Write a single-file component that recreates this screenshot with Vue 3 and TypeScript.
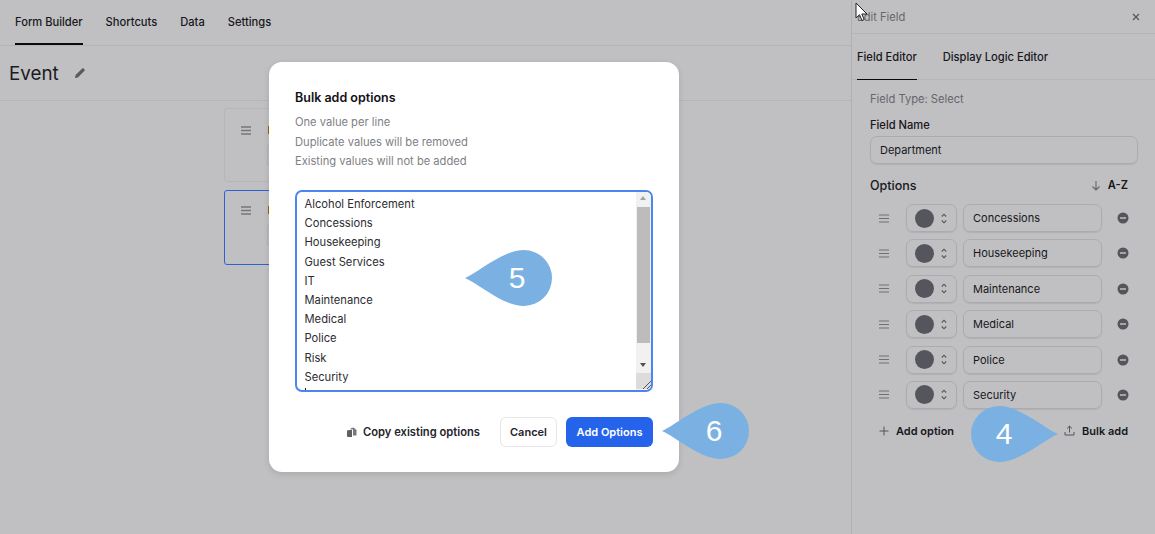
<script setup lang="ts">
const tabs: string[] = ['Form Builder', 'Shortcuts', 'Data', 'Settings']
const instructions: string[] = ['One value per line', 'Duplicate values will be removed', 'Existing values will not be added']
const lines: string[] = ['Alcohol Enforcement', 'Concessions', 'Housekeeping', 'Guest Services', 'IT', 'Maintenance', 'Medical', 'Police', 'Risk', 'Security']
const options: string[] = ['Concessions', 'Housekeeping', 'Maintenance', 'Medical', 'Police', 'Security']
const bubbles = [
  { n: '5', cls: 'b5' },
  { n: '6', cls: 'b6' },
  { n: '4', cls: 'b4' },
]
</script>

<template>
  <div class="page">
    <main class="main">
      <nav class="tabs">
        <span v-for="(t, i) in tabs" :key="t" class="tab" :class="{ active: i === 0 }">{{ t }}</span>
      </nav>
      <header class="title-row">
        <h1>Event</h1>
        <svg class="pencil" width="12" height="12" viewBox="0 0 12 12"><path d="M1 11l.6-2.900L8.200 1.500a1 1 0 0 1 1.400 0l.9.900a1 1 0 0 1 0 1.400L3.900 10.400z" fill="#59595e"/></svg>
      </header>
      <section class="cards">
        <div class="card">
          <svg class="grip" width="10" height="9" viewBox="0 0 10 9"><path d="M0 1h10M0 4.500h10M0 8h10" stroke="#77777b" stroke-width="1.300"/></svg>
          <div class="card-body">
            <span class="card-label"></span>
            <span class="card-input"></span>
          </div>
        </div>
        <div class="card selected">
          <svg class="grip" width="10" height="9" viewBox="0 0 10 9"><path d="M0 1h10M0 4.500h10M0 8h10" stroke="#77777b" stroke-width="1.300"/></svg>
          <div class="card-body">
            <span class="card-label"></span>
            <span class="card-input"></span>
          </div>
        </div>
      </section>
    </main>

    <aside class="panel">
      <div class="panel-head">
        <span>Edit Field</span>
        <svg width="8" height="8" viewBox="0 0 8 8"><path d="M1 1l6 6M7 1L1 7" stroke="#55555a" stroke-width="1.200"/></svg>
      </div>
      <div class="panel-tabs">
        <span class="ptab active">Field Editor</span>
        <span class="ptab">Display Logic Editor</span>
      </div>
      <div class="panel-body">
        <div class="field-type">Field Type: Select</div>
        <label class="field-label">Field Name</label>
        <div class="input name-input">Department</div>
        <div class="options-head">
          <span class="options-title">Options</span>
          <span class="sort">
            <svg width="10" height="11" viewBox="0 0 10 11"><path d="M5 1v9M1.500 6.500L5 10l3.500-3.500" fill="none" stroke="#66666a" stroke-width="1.100"/></svg>
            A-Z
          </span>
        </div>
        <div class="option-list">
          <div v-for="o in options" :key="o" class="option">
            <svg class="row-grip" width="10" height="9" viewBox="0 0 10 9"><path d="M0 1h10M0 4.500h10M0 8h10" stroke="#707075" stroke-width="1.200"/></svg>
            <div class="color-select">
              <span class="dot"></span>
              <svg width="6" height="11" viewBox="0 0 6 11"><path d="M.8 3.500L3 1.200l2.200 2.300M.8 7.500L3 9.800l2.200-2.300" fill="none" stroke="#55555a" stroke-width="1.100"/></svg>
            </div>
            <div class="input opt-input">{{ o }}</div>
            <svg class="minus" width="12" height="12" viewBox="0 0 12 12"><circle cx="6" cy="6" r="5.500" fill="#55555b"/><path d="M3 6h6" stroke="#c0c0c2" stroke-width="1.500"/></svg>
          </div>
        </div>
        <div class="option-actions">
          <span class="action add">
            <svg width="10" height="10" viewBox="0 0 10 10"><path d="M5 .5v9M.5 5h9" stroke="#55555a" stroke-width="1"/></svg>
            Add option
          </span>
          <span class="action">
            <svg width="11" height="11" viewBox="0 0 11 11"><path d="M5.500 7.500V1.200M3 3.500l2.500-2.400L8 3.500M1 7v3h9V7" fill="none" stroke="#55555a" stroke-width="1"/></svg>
            Bulk add
          </span>
        </div>
      </div>
    </aside>

    <div class="modal">
      <h2>Bulk add options</h2>
      <p v-for="t in instructions" :key="t" class="hint">{{ t }}</p>
      <div class="textarea">
        <div class="lines">
          <div v-for="l in lines" :key="l" class="line">{{ l }}</div>
          <i class="caret"></i>
        </div>
        <div class="scrollbar">
          <span class="arrow up"></span>
          <span class="thumb"></span>
          <span class="track"></span>
          <span class="arrow down"></span>
          <span class="corner">
            <svg width="10" height="10" viewBox="0 0 10 10"><path d="M2 10l8-8M6 10l4-4" stroke="#555" stroke-width="1"/></svg>
          </span>
        </div>
      </div>
      <div class="modal-actions">
        <span class="copy">
          <svg width="10" height="10" viewBox="0 0 10 10"><path d="M0 3.500l5-1V10H1a1 1 0 0 1-1-1z" fill="#5f5f64"/><path d="M3 1.500L6.500.5 9.500 3v5.500H6V2.500z" fill="#77777c"/></svg>
          Copy existing options
        </span>
        <button class="btn cancel">Cancel</button>
        <button class="btn primary">Add Options</button>
      </div>
    </div>

    <div v-for="b in bubbles" :key="b.n" class="bubble" :class="b.cls">
      <svg class="drop" width="87" height="56" viewBox="0 0 87 56"><path d="M0 28C14 22 38 0 59 0a28 28 0 0 1 0 56C38 56 14 34 0 28z" fill="#7ab1e2"/></svg>
      <span class="num">{{ b.n }}</span>
    </div>

    <svg class="cursor" width="13" height="21" viewBox="0 0 13 21"><path d="M1 1v15l3.500-3.300 2.500 5.800 2.200-1-2.400-5.500H12z" fill="#fff" stroke="#222" stroke-width="1"/></svg>
  </div>
</template>

<style>
html, body { margin: 0; }
</style>

<style scoped>
.page {
  position: relative;
  display: flex;
  width: 1155px;
  height: 534px;
  overflow: hidden;
  background: #c0c0c2;
  color: #17171c;
  font-family: Inter, "Liberation Sans", sans-serif;
  font-size: 11.150px;
}
.main { flex: 1; min-width: 0; display: flex; flex-direction: column; }
.tabs {
  height: 46px;
  box-sizing: border-box;
  display: flex;
  gap: 23px;
  padding-left: 15px;
  border-bottom: 1px solid #b5b5b7;
}
.tab {
  height: 45px;
  box-sizing: border-box;
  padding-top: 15px;
  font-weight: 500;
  line-height: 14px;
}
.tab.active { border-bottom: 2px solid #0a0a0c; }
.title-row {
  height: 55px;
  box-sizing: border-box;
  display: flex;
  align-items: center;
  gap: 15px;
  padding: 0 0 0 9px;
  border-bottom: 1px solid #b5b5b7;
}
h1 { margin: 0; font-size: 18.800px; font-weight: 400; color: #1b1b22; }
.pencil { margin-top: -1px; }
.cards {
  width: 403px;
  margin: 7px 0 0 224px;
  display: flex;
  flex-direction: column;
  gap: 8px;
}
.card {
  height: 74px;
  box-sizing: border-box;
  display: flex;
  gap: 16px;
  border: 1px solid #b6b6b8;
  border-radius: 3px;
  padding: 17px 0 0 16px;
}
.card.selected { height: 75px; border-color: #2a62d6; padding-top: 15px; }
.grip { display: block; flex: none; }
.card-body { flex: 1; display: flex; flex-direction: column; }
.card-label { width: 20px; height: 8px; margin-left: 1px; background: #a85a00; }
.card-input {
  height: 27px;
  margin-top: 8px;
  margin-right: 16px;
  box-sizing: border-box;
  border: 1px solid #b4b4b6;
  border-radius: 7px;
}

.panel {
  width: 304px;
  flex: none;
  box-sizing: border-box;
  border-left: 1px solid #b0b0b2;
}
.panel-head {
  height: 34px;
  box-sizing: border-box;
  display: flex;
  align-items: center;
  justify-content: space-between;
  padding: 0 15px 0 5px;
  color: #66666c;
  border-bottom: 1px solid #b5b5b7;
}
.panel-tabs {
  height: 46px;
  box-sizing: border-box;
  display: flex;
  gap: 26px;
  padding-left: 5px;
  border-bottom: 1px solid #b5b5b7;
}
.ptab { padding-top: 16px; height: 46px; box-sizing: border-box; font-weight: 500; line-height: 14px; }
.ptab.active { border-bottom: 1px solid #0a0a0c; }
.panel-body { padding: 12px 17px 0 18px; }
.field-type { line-height: 14px; color: #66666c; }
.field-label { display: block; margin-top: 12px; line-height: 14px; font-weight: 500; }
.input {
  box-sizing: border-box;
  display: flex;
  align-items: center;
  font-size: 11px;
  border: 1px solid #acacae;
  border-radius: 7px;
  box-shadow: 0 1px 1px rgba(0, 0, 0, 0.08);
}
.name-input { height: 28px; margin-top: 4px; padding-left: 9px; }
.options-head {
  display: flex;
  align-items: center;
  justify-content: space-between;
  height: 20px;
  margin-top: 11px;
  padding-right: 10px;
}
.options-title { font-size: 12.500px; font-weight: 500; }
.sort { display: flex; align-items: center; gap: 7px; font-weight: 600; }
.option-list { margin-top: 9px; display: flex; flex-direction: column; gap: 7.400px; }
.option { display: flex; align-items: center; height: 28px; padding-left: 9px; }
.row-grip { flex: none; margin-right: 17px; }
.color-select {
  width: 51px;
  height: 28px;
  flex: none;
  box-sizing: border-box;
  display: flex;
  align-items: center;
  gap: 7px;
  padding-left: 8px;
  border: 1px solid #acacae;
  border-radius: 7px;
  box-shadow: 0 1px 1px rgba(0, 0, 0, 0.08);
}
.dot { width: 19px; height: 19px; border-radius: 50%; background: #55555d; }
.opt-input { width: 139px; height: 28px; margin-left: 6px; padding-left: 9px; flex: none; }
.minus { margin-left: 15px; flex: none; }
.option-actions {
  display: flex;
  justify-content: space-between;
  margin-top: 15px;
  padding: 0 10px 0 9px;
}
.action { display: flex; align-items: center; gap: 7px; font-weight: 600; line-height: 14px; font-size: 11px; }

.modal {
  position: absolute;
  left: 269px;
  top: 62px;
  width: 410px;
  height: 410px;
  box-sizing: border-box;
  padding: 28px 26px 0 26px;
  background: #fff;
  border-radius: 13px;
  box-shadow: 0 2px 6px rgba(0, 0, 0, 0.12);
}
h2 { margin: 0 0 7px; font-size: 12.500px; line-height: 16px; font-weight: 600; color: #111116; }
.hint { margin: 0; line-height: 19.500px; color: #808086; }
.textarea {
  display: flex;
  height: 202px;
  margin-top: 18px;
  box-sizing: border-box;
  border: 2.500px solid #4b85f0;
  border-radius: 7px;
  overflow: hidden;
}
.lines { flex: 1; position: relative; padding: 3.500px 0 0 7.500px; overflow: hidden; }
.line { font-size: 11.200px; line-height: 19.200px; color: #2c2c31; }
.caret { display: block; width: 1px; height: 6px; margin-top: 1px; background: #111; }
.scrollbar {
  width: 15.500px;
  flex: none;
  display: flex;
  flex-direction: column;
  align-items: center;
  background: #f1f1f1;
}
.arrow { width: 0; height: 0; flex: none; border-left: 3.500px solid transparent; border-right: 3.500px solid transparent; }
.arrow.up { margin: 4.500px 0 7px; border-bottom: 4px solid #a3a3a3; }
.arrow.down { margin: 6px 0 6px; border-top: 4px solid #505050; }
.thumb { width: 13px; height: 136px; flex: none; background: #bcbcbc; margin-left: 1px; }
.track { height: 14px; flex: none; }
.corner {
  width: 15.500px;
  height: 16px;
  flex: none;
  display: flex;
  align-items: flex-end;
  justify-content: flex-end;
  background: #dcdcdc;
}
.modal-actions {
  display: flex;
  align-items: center;
  justify-content: flex-end;
  margin-top: 25px;
}
.copy {
  display: flex;
  align-items: center;
  gap: 6px;
  margin-right: 20px;
  font-weight: 600;
  font-size: 11.200px;
  color: #24242a;
}
.btn {
  height: 30px;
  box-sizing: border-box;
  border-radius: 6px;
  font: 600 11px Inter, "Liberation Sans", sans-serif;
}
.cancel {
  width: 57px;
  margin-right: 9px;
  background: #fff;
  border: 1px solid #e6e6e8;
  color: #24242a;
}
.primary { width: 87px; background: #2563eb; border: 0; color: #fff; }

.bubble { position: absolute; width: 87px; height: 56px; }
.drop { position: absolute; inset: 0; }
.num {
  position: absolute;
  left: 17px;
  right: 0;
  top: 0;
  text-align: center;
  line-height: 56px;
  font-family: "Liberation Sans", sans-serif;
  font-size: 30px;
  color: #fff;
}
.b5 { left: 465px; top: 250px; }
.b6 { left: 662px; top: 403px; }
.b4 { left: 971px; top: 406px; }
.b4 .drop { transform: scaleX(-1); }
.b4 .num { left: 0; right: 21px; }
.cursor { position: absolute; left: 855px; top: 2px; }
</style>
